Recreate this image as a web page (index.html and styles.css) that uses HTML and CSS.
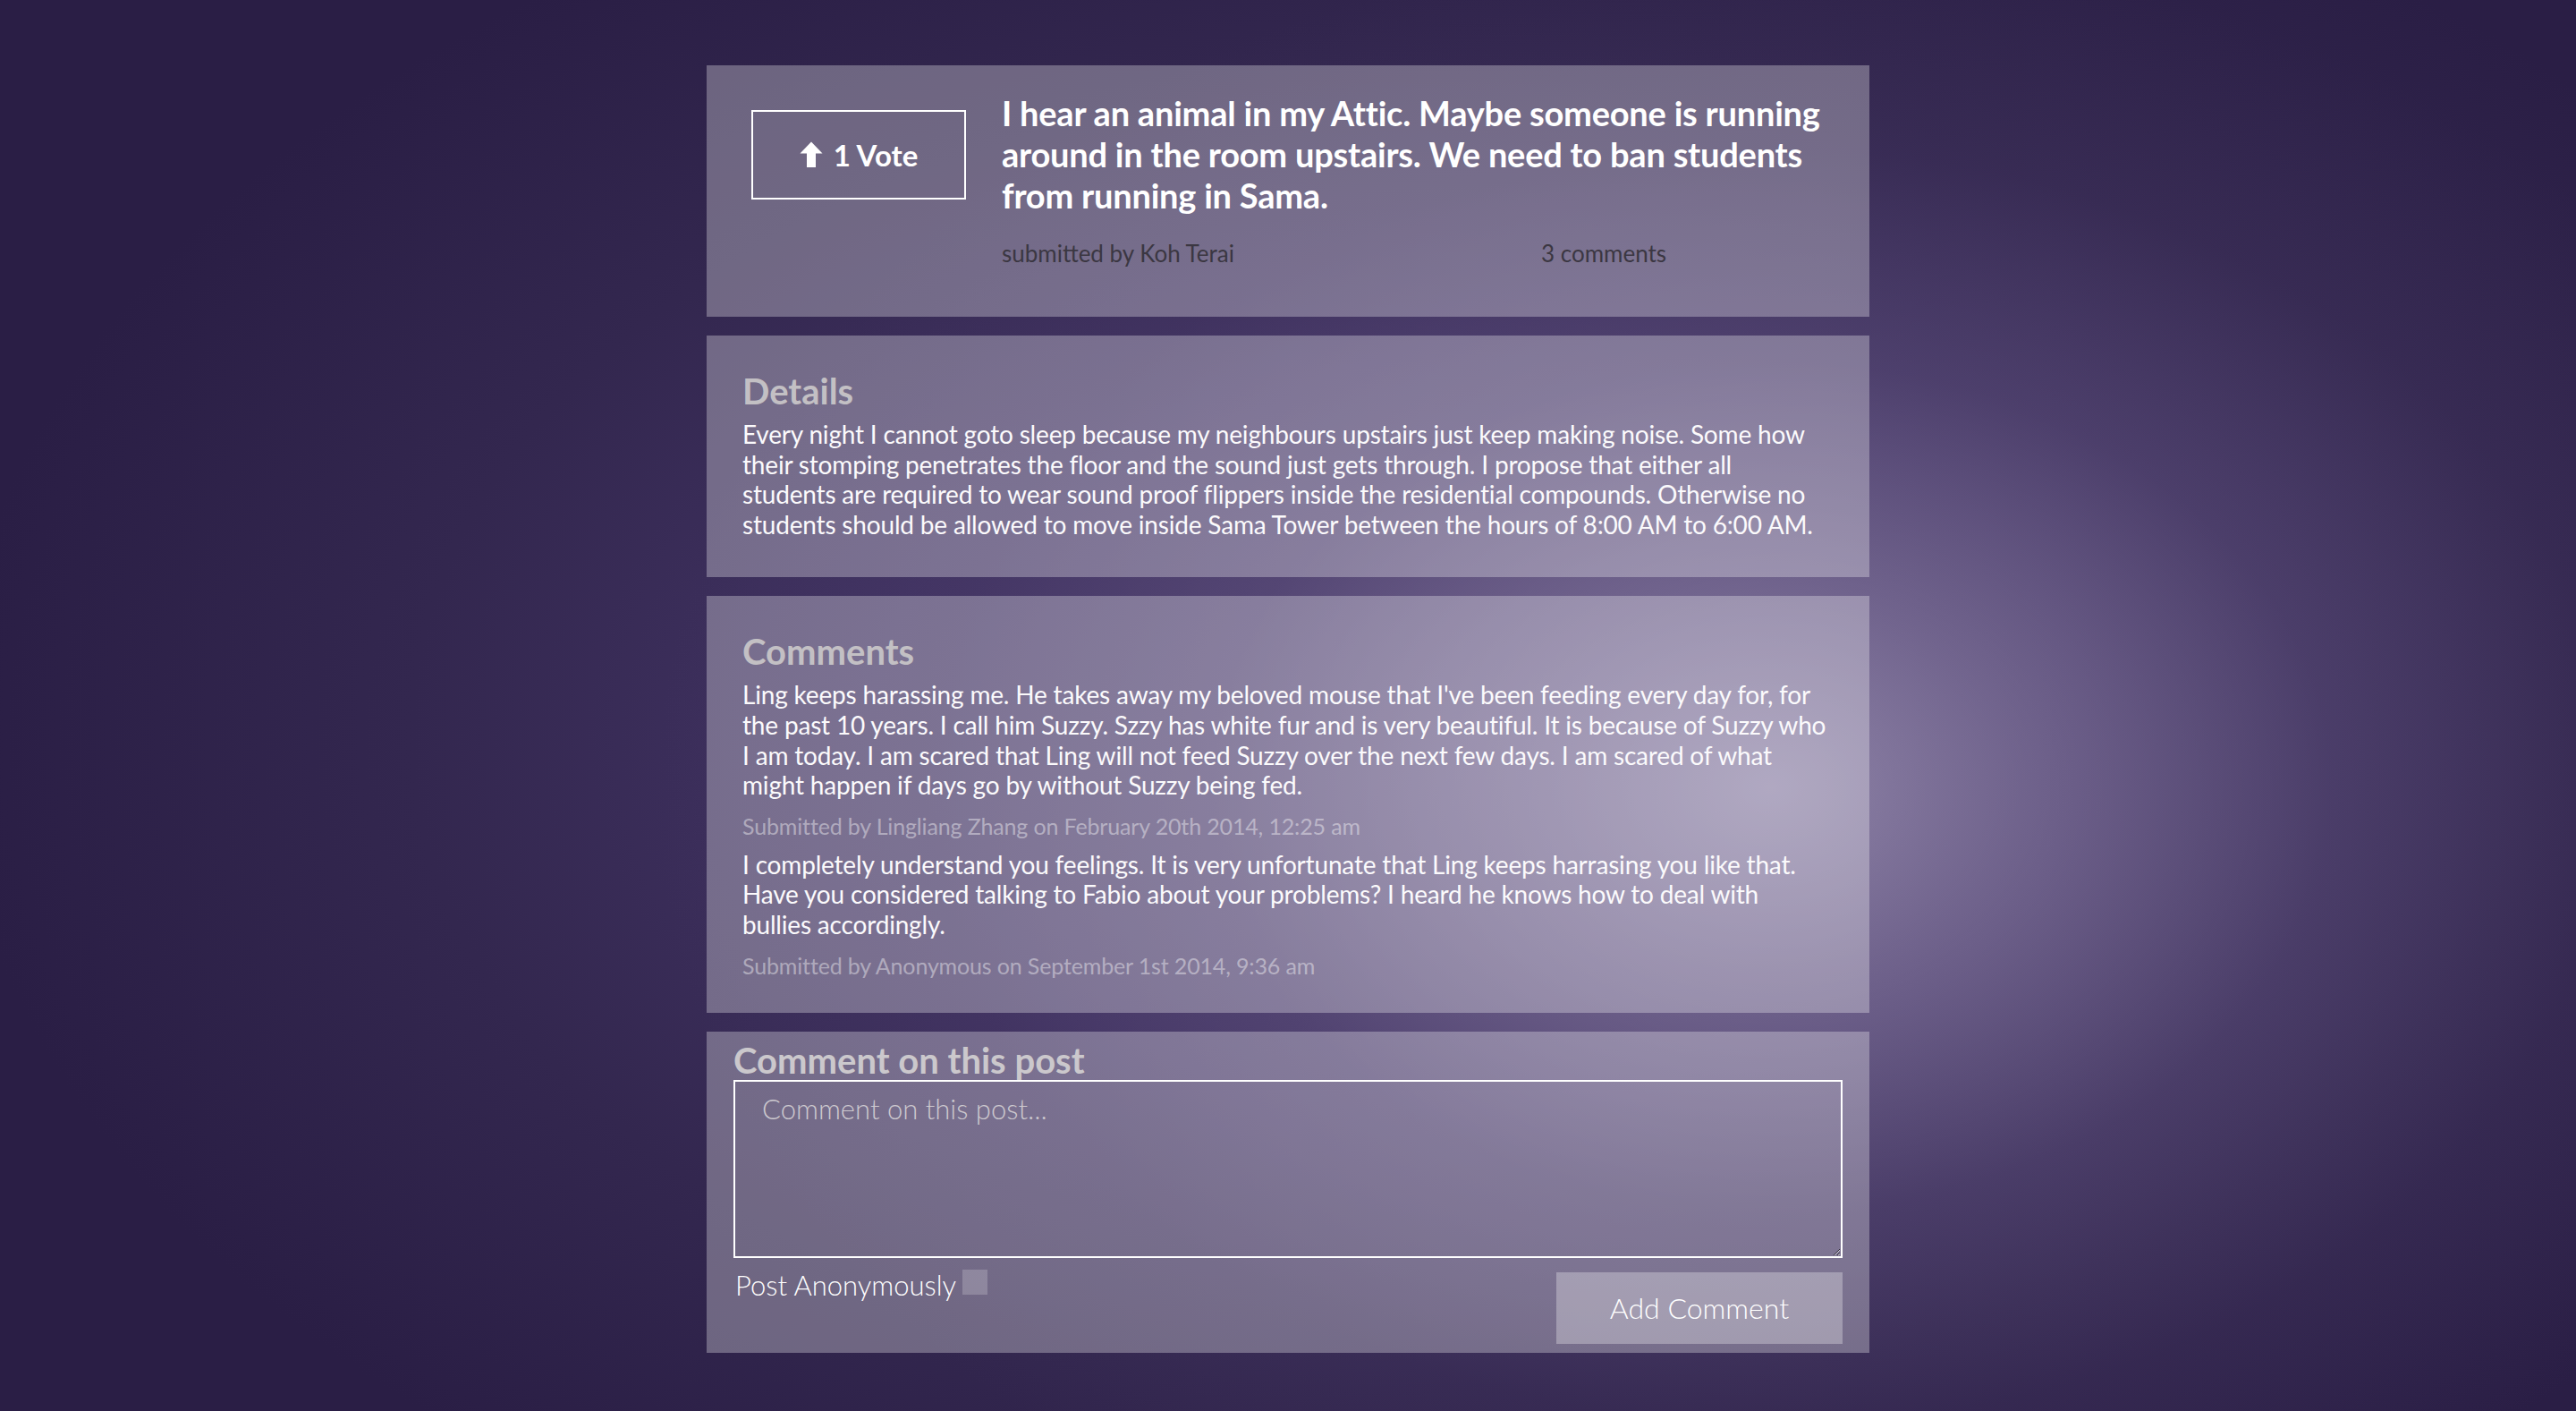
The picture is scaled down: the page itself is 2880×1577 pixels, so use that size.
FILE: index.html
```html
<!DOCTYPE html>
<html lang="en">
<head>
<meta charset="utf-8">
<title>Post</title>
<link rel="stylesheet" href="styles.css">
</head>
<body>
<main class="page">
  <section class="card post">
    <div class="vote">
      <svg class="vote-arrow" viewBox="0 0 26 29" width="26" height="29" aria-hidden="true"><path d="M13 0.5 L25.5 13.5 H18 V29 H8 V13.5 H0.5 Z" fill="#fff"/></svg>
      <span>1 Vote</span>
    </div>
    <div class="post-main">
      <h1 class="post-title">I hear an animal in my Attic. Maybe someone is running around in the room upstairs. We need to ban students from running in Sama.</h1>
      <div class="post-meta">
        <span class="post-author">submitted by Koh Terai</span>
        <span class="post-count">3 comments</span>
      </div>
    </div>
  </section>

  <section class="card details">
    <h2 class="card-heading">Details</h2>
    <p class="body-text">Every night I cannot goto sleep because my neighbours upstairs just keep making noise. Some how their stomping penetrates the floor and the sound just gets through. I propose that either all students are required to wear sound proof flippers inside the residential compounds. Otherwise no students should be allowed to move inside Sama Tower between the hours of 8:00 AM to 6:00 AM.</p>
  </section>

  <section class="card comments">
    <h2 class="card-heading">Comments</h2>
    <div class="comment">
      <p class="body-text">Ling keeps harassing me. He takes away my beloved mouse that I've been feeding every day for, for the past 10 years. I call him Suzzy. Szzy has white fur and is very beautiful. It is because of Suzzy who I am today. I am scared that Ling will not feed Suzzy over the next few days. I am scared of what might happen if days go by without Suzzy being fed.</p>
      <p class="comment-meta">Submitted by Lingliang Zhang on February 20th 2014, 12:25 am</p>
    </div>
    <div class="comment">
      <p class="body-text">I completely understand you feelings. It is very unfortunate that Ling keeps harrasing you like that. Have you considered talking to Fabio about your problems? I heard he knows how to deal with bullies accordingly.</p>
      <p class="comment-meta">Submitted by Anonymous on September 1st 2014, 9:36 am</p>
    </div>
  </section>

  <form class="card reply" onsubmit="return false;">
    <h2 class="reply-heading">Comment on this post</h2>
    <textarea class="reply-input" placeholder="Comment on this post..."></textarea>
    <div class="reply-row">
      <label class="anon">Post Anonymously <input type="checkbox" class="anon-box"></label>
      <button type="submit" class="add-btn">Add Comment</button>
    </div>
  </form>
</main>
</body>
</html>
```

FILE: styles.css
```css
* { box-sizing: border-box; }

html, body {
  margin: 0;
  padding: 0;
}

body {
  min-height: 1577px;
  font-family: Lato, "Open Sans", "Liberation Sans", sans-serif;
  color: #fff;
  background-color: #2a1e45;
  background-image:
    radial-gradient(ellipse 1250px 950px at 1980px 880px,
      rgba(170, 160, 192, 0.72) 0%,
      rgba(150, 138, 175, 0.56) 22%,
      rgba(112, 98, 142, 0.32) 50%,
      rgba(90, 74, 120, 0.12) 75%,
      rgba(80, 64, 110, 0) 100%),
    radial-gradient(ellipse 1700px 1050px at 1650px 820px,
      #4e406e 0%,
      #403261 40%,
      #33274f 70%,
      #2a1e45 100%);
}

.page {
  width: 1300px;
  margin: 0 auto;
  padding: 73px 0 40px;
  display: flex;
  flex-direction: column;
  gap: 21px;
}

.card {
  background: rgba(255, 255, 255, 0.3);
  padding: 40px 47px 40px 40px;
}

/* Post card */
.post {
  display: flex;
  align-items: flex-start;
  padding: 30px 30px 56px 50px;
}

.vote {
  flex: 0 0 240px;
  height: 100px;
  margin-top: 20px;
  margin-right: 40px;
  border: 2px solid #fff;
  display: flex;
  align-items: center;
  justify-content: center;
  gap: 12px;
  font-weight: 700;
  font-size: 33px;
  line-height: 1;
}

.vote-arrow { display: block; margin-top: -2px; }

.post-main { flex: 1; }

.post-title {
  margin: 0;
  font-size: 38px;
  line-height: 46px;
  font-weight: 700;
  letter-spacing: -0.22px;
  color: #fff;
}

.post-meta {
  margin-top: 28px;
  display: flex;
  font-size: 26px;
  line-height: 29px;
  color: #3b3742;
}

.post-author { width: 603px; }

/* Headings */
.card-heading {
  margin: 0 0 10px;
  font-size: 40px;
  line-height: 44px;
  font-weight: 700;
  color: #c3c0c4;
}

.details { padding-bottom: 42px; }
.comments { padding-bottom: 38px; }

.body-text {
  margin: 0;
  font-size: 28px;
  line-height: 1.2;
  letter-spacing: -0.18px;
  color: #fbfafc;
}

.comment-meta {
  margin: 13px 0 12px;
  font-size: 25px;
  line-height: 30px;
  letter-spacing: -0.15px;
  color: rgba(255, 255, 255, 0.42);
}

.comment:last-child .comment-meta { margin-bottom: 0; }

/* Reply form */
.card.reply {
  padding: 10px 30px 10px;
}

.reply-heading {
  margin: 0;
  font-size: 40px;
  line-height: 44px;
  font-weight: 700;
  color: #cbc8cc;
}

.reply-input {
  display: block;
  width: 100%;
  height: 199px;
  margin: 0;
  padding: 12px 30px;
  background: transparent;
  border: 2px solid #fff;
  border-radius: 0;
  font-family: Lato, "Open Sans", sans-serif;
  font-weight: 300;
  font-size: 31px;
  line-height: 1.2;
  color: #fff;
  outline: none;
}

.reply-input::placeholder {
  color: #cdc9cf;
  opacity: 1;
}

.reply-row {
  display: flex;
  justify-content: space-between;
  align-items: flex-start;
  margin-top: 8px;
}

.anon {
  display: flex;
  align-items: center;
  gap: 7px;
  font-weight: 300;
  font-size: 31px;
  line-height: 36px;
  color: #fff;
  margin-top: 4px;
  margin-left: 2px;
}

.anon-box {
  appearance: none;
  -webkit-appearance: none;
  width: 28px;
  height: 28px;
  margin: 0;
  border: 0;
  background: rgba(255, 255, 255, 0.2);
  position: relative;
  top: -3px;
}

.add-btn {
  width: 320px;
  height: 80px;
  margin-top: 8px;
  border: 0;
  border-radius: 0;
  background: rgba(255, 255, 255, 0.3);
  color: #fff;
  font-family: Lato, "Open Sans", sans-serif;
  font-weight: 300;
  font-size: 32px;
  cursor: pointer;
}
```
